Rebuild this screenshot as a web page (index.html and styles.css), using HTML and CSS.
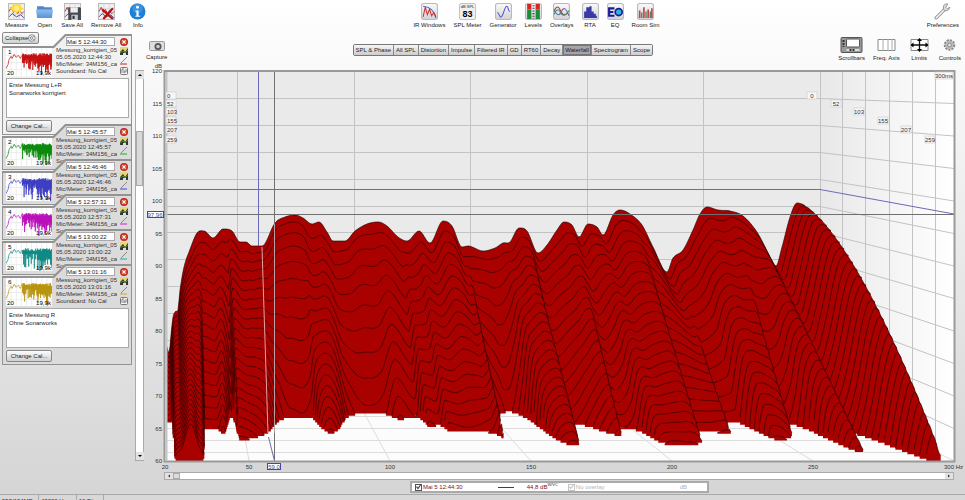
FILE: index.html
```
<!DOCTYPE html>
<html lang="en">
<head>
<meta charset="UTF-8">
<title>Room measurements</title>
<link rel="stylesheet" href="styles.css">
</head>
<body>
<svg class="defs" width="0" height="0">
	<defs>
		<linearGradient id="tile" x1="0" y1="0" x2="0" y2="1"><stop offset="0" stop-color="#fafafa"/><stop offset="1" stop-color="#d2d2d6"/></linearGradient>
		<linearGradient id="folder" x1="0" y1="0" x2="0" y2="1"><stop offset="0" stop-color="#8fbdf0"/><stop offset="1" stop-color="#5b93d6"/></linearGradient>
		<linearGradient id="side" x1="0" x2="1"><stop offset="0" stop-color="#e8e8e8"/><stop offset="1" stop-color="#ffffff"/></linearGradient>
		<g id="base"><rect x=".5" y=".5" width="15" height="15" rx="2" fill="url(#tile)" stroke="#b9b9bd"/></g>
		<g id="graph"><rect x=".5" y=".5" width="15" height="15" fill="#f1f1f3" stroke="#bbb"/><path d="M0 5.5H16M0 10.5H16M5.5 0V16M10.5 0V16" stroke="#ccc" stroke-width=".6"/><path d="M1 8L3 4L5 9L7 6L9 10L11 7L13 10L15 8" fill="none" stroke="#b33" stroke-width=".9"/><path d="M1 13L4 10L8 13L12 11L15 14" fill="none" stroke="#44a" stroke-width=".9"/></g>
		<g id="cross"><circle cx="4" cy="4" r="4" fill="#b82a1c"/><circle cx="4" cy="4" r="3" fill="#d8402c"/><path d="M2.4 2.4L5.6 5.6M5.6 2.4L2.4 5.6" stroke="#fff" stroke-width="1.2"/></g>
		<g id="disk"><rect width="8" height="8" fill="#333"/><path d="M0 5L3 2L5 5L8 1V0H0Z" fill="#e6d77a"/><path d="M0 6L3 4L5 6L8 3" stroke="#4a8a3a" fill="none"/><rect x="3" y="6" width="3" height="2" fill="#ddd"/></g>
		<g id="page"><rect x=".5" y=".5" width="7" height="7" rx="1" fill="#f4f4f4" stroke="#777"/><path d="M2 2V6M2 2H4M4 3V6M6 2V5H4" stroke="#555" stroke-width=".7" fill="none"/></g>
	</defs>
</svg>

<div class="toolbar">
	<div class="tools">
		<button class="tool"><svg class="icon" viewBox="0 0 16 16"><use href="#graph"/><path d="M8 0L9.5 2L12 1L12 3.5L14.500 5L12 6.500L12 9L9.500 8L8 10.500L6.500 8L4 9L4 6.500L1.500 5L4 3.500L4 1L6.500 2Z" fill="#ffd92e"/><circle cx="8" cy="5" r="2.500" fill="#fff27a"/></svg>Measure</button>
		<button class="tool"><svg class="icon" viewBox="0 0 16 16"><path d="M1 3H7L8 4H15V8H1Z" fill="#4f86c8"/><path d="M0 6H16L15 14H1Z" fill="url(#folder)"/></svg>Open</button>
		<button class="tool"><svg class="icon" viewBox="0 0 16 16"><use href="#graph"/><path d="M4 4H15L16 5V16H4Z" fill="#444a52"/><rect x="6" y="4" width="7" height="5" fill="#eee"/><rect x="7" y="11" width="6" height="5" fill="#c9cdd2"/><rect x="8" y="12" width="2" height="3" fill="#333"/></svg>Save All</button>
		<button class="tool"><svg class="icon" viewBox="0 0 16 16"><use href="#graph"/><path d="M4 6L14 15M14 5L5 15" stroke="#b80f0f" stroke-width="2"/></svg>Remove All</button>
		<button class="tool"><svg class="icon" viewBox="0 0 16 16"><circle cx="8" cy="8" r="7.500" fill="#1c7fd6"/><circle cx="8" cy="5" r="5" fill="#53a6ea" opacity=".5"/><circle cx="8" cy="4" r="1.400" fill="#fff"/><path d="M6 7H9V12H10.500V13H6V12H7V8H6Z" fill="#fff"/></svg>Info</button>
	</div>
	<div class="tools">
		<button class="tool"><svg class="icon" viewBox="0 0 16 16"><use href="#base"/><path d="M2 3Q12 4 14 14" fill="none" stroke="#55b" /><path d="M2 13L4 4L6 11L8 6L10 12L12 9L14 13" fill="none" stroke="#c33"/></svg>IR Windows</button>
		<button class="tool"><span class="meter"><small>dB SPL</small><b>83</b></span>SPL Meter</button>
		<button class="tool"><svg class="icon" viewBox="0 0 16 16"><use href="#base"/><path d="M2 9C4 9 4 14 6 13S9 3 11 3S12 8 14 8" fill="none" stroke="#55c"/></svg>Generator</button>
		<button class="tool"><svg class="icon" viewBox="0 0 16 16"><use href="#base"/><path d="M4 1V6M12 1V6" stroke="#d22" stroke-width="4"/><path d="M4 6V15M12 6V15" stroke="#1d8d3a" stroke-width="4"/><path d="M8 2V15" stroke="#444" stroke-width="2" stroke-dasharray="1 1.500"/></svg>Levels</button>
		<button class="tool"><svg class="icon" viewBox="0 0 16 16"><use href="#base"/><path d="M1 8Q4 0 7 7T14 9" fill="none" stroke="#b33"/><path d="M1 11Q4 3 7 9T15 7" fill="none" stroke="#396"/><path d="M1 6Q5 15 8 8T15 12" fill="none" stroke="#66a"/></svg>Overlays</button>
		<button class="tool"><svg class="icon" viewBox="0 0 16 16"><use href="#base"/><path d="M2 14V8H4V4H7V3H9V8H11V10H13V12H14V14Z" fill="#3939a8"/></svg>RTA</button>
		<button class="tool"><svg class="icon" viewBox="0 0 16 16"><use href="#base"/><path d="M7 5H2V12H7M2 8.500H6" fill="none" stroke="#1b1b98" stroke-width="2"/><circle cx="11" cy="8.500" r="3.300" fill="#2bb5d6" stroke="#1b1b98" stroke-width="1.600"/></svg>EQ</button>
		<button class="tool"><svg class="icon" viewBox="0 0 16 16"><use href="#base"/><path d="M2.500 14V7M6.500 14V4M10.500 14V6M14 14V5" stroke="#b44" stroke-width="1.500"/><path d="M4.500 14V9M8.500 14V8M12.500 14V8" stroke="#575" stroke-width="1.200"/></svg>Room Sim</button>
	</div>
	<div class="tools">
		<button class="tool"><svg class="icon" viewBox="0 0 16 16"><path d="M2 14L10 6" stroke="#888" stroke-width="3" stroke-linecap="round"/><path d="M2 14L10 6" stroke="#eee" stroke-width="1.500" stroke-linecap="round"/><path d="M13 1C10 0 8 3 9 6C10 8 14 8 15 4L12.500 5.500L11 4Z" fill="#ddd" stroke="#888" stroke-width=".8"/></svg>Preferences</button>
	</div>
</div>

<div class="main">
	<div class="sidebar">
		<button class="btn collapse">Collapse <svg width="8" height="8" viewBox="0 0 8 8"><circle cx="4" cy="4" r="3.500" fill="#eee" stroke="#666" stroke-width=".7"/><path d="M4 2L2 4L4 6M6 2L4 4L6 6" fill="none" stroke="#555" stroke-width=".7"/></svg></button>
		<div class="card open active">
			<div class="card-head"><input class="name" aria-label="Measurement 1" value="Mai 5 12:44:30"><svg class="mini" viewBox="0 0 8 8"><use href="#cross"/></svg></div>
			<div class="card-body">
				<svg class="thumb" viewBox="0 0 45 27" data-color="#c40d0d" data-num="1"></svg>
				<div class="info"><p>Messung_korrigiert_05-05</p><p>05.05.2020 12:44:30</p><p>Mic/Meter: 34M156_cal_0</p><p>Soundcard: No Cal</p></div>
				<div class="minis"><svg class="mini" viewBox="0 0 8 8"><use href="#disk"/></svg><svg class="mini" viewBox="0 0 8 8"><path d="M1 6L7 0" stroke="#888"/><path d="M0 7H7" stroke="#c22"/></svg><svg class="mini" viewBox="0 0 8 8"><use href="#page"/></svg></div>
			</div>
			<textarea class="notes" aria-label="Notes 1">Erste Messung L+R
Sonarworks korrigiert</textarea>
			<button class="btn cal">Change Cal...</button>
		</div>
		<div class="card">
			<div class="card-head"><input class="name" aria-label="Measurement 2" value="Mai 5 12:45:57"><svg class="mini" viewBox="0 0 8 8"><use href="#cross"/></svg></div>
			<div class="card-body">
				<svg class="thumb" viewBox="0 0 45 27" data-color="#0a8a0a" data-num="2"></svg>
				<div class="info"><p>Messung_korrigiert_05-05</p><p>05.05.2020 12:45:57</p><p>Mic/Meter: 34M156_cal_0</p><p>Soundcard: No Cal</p></div>
				<div class="minis"><svg class="mini" viewBox="0 0 8 8"><use href="#disk"/></svg><svg class="mini" viewBox="0 0 8 8"><path d="M1 6L7 0" stroke="#888"/><path d="M0 7H7" stroke="#2a2"/></svg></div>
			</div>
		</div>
		<div class="card">
			<div class="card-head"><input class="name" aria-label="Measurement 3" value="Mai 5 12:46:46"><svg class="mini" viewBox="0 0 8 8"><use href="#cross"/></svg></div>
			<div class="card-body">
				<svg class="thumb" viewBox="0 0 45 27" data-color="#3c3cc4" data-num="3"></svg>
				<div class="info"><p>Messung_korrigiert_05-05</p><p>05.05.2020 12:46:46</p><p>Mic/Meter: 34M156_cal_0</p><p>Soundcard: No Cal</p></div>
				<div class="minis"><svg class="mini" viewBox="0 0 8 8"><use href="#disk"/></svg><svg class="mini" viewBox="0 0 8 8"><path d="M1 6L7 0" stroke="#888"/><path d="M0 7H7" stroke="#44c"/></svg></div>
			</div>
		</div>
		<div class="card">
			<div class="card-head"><input class="name" aria-label="Measurement 4" value="Mai 5 12:57:31"><svg class="mini" viewBox="0 0 8 8"><use href="#cross"/></svg></div>
			<div class="card-body">
				<svg class="thumb" viewBox="0 0 45 27" data-color="#bb0dbb" data-num="4"></svg>
				<div class="info"><p>Messung_korrigiert_05-05</p><p>05.05.2020 12:57:31</p><p>Mic/Meter: 34M156_cal_0</p><p>Soundcard: No Cal</p></div>
				<div class="minis"><svg class="mini" viewBox="0 0 8 8"><use href="#disk"/></svg><svg class="mini" viewBox="0 0 8 8"><path d="M1 6L7 0" stroke="#888"/><path d="M0 7H7" stroke="#c2c"/></svg></div>
			</div>
		</div>
		<div class="card">
			<div class="card-head"><input class="name" aria-label="Measurement 5" value="Mai 5 13:00:22"><svg class="mini" viewBox="0 0 8 8"><use href="#cross"/></svg></div>
			<div class="card-body">
				<svg class="thumb" viewBox="0 0 45 27" data-color="#0d8a84" data-num="5"></svg>
				<div class="info"><p>Messung_korrigiert_05-05</p><p>05.05.2020 13:00:22</p><p>Mic/Meter: 34M156_cal_0</p><p>Soundcard: No Cal</p></div>
				<div class="minis"><svg class="mini" viewBox="0 0 8 8"><use href="#disk"/></svg><svg class="mini" viewBox="0 0 8 8"><path d="M1 6L7 0" stroke="#888"/><path d="M0 7H7" stroke="#2a9"/></svg></div>
			</div>
		</div>
		<div class="card open">
			<div class="card-head"><input class="name" aria-label="Measurement 6" value="Mai 5 13:01:16"><svg class="mini" viewBox="0 0 8 8"><use href="#cross"/></svg></div>
			<div class="card-body">
				<svg class="thumb" viewBox="0 0 45 27" data-color="#b8930d" data-num="6"></svg>
				<div class="info"><p>Messung_korrigiert_05-05</p><p>05.05.2020 13:01:16</p><p>Mic/Meter: 34M156_cal_0</p><p>Soundcard: No Cal</p></div>
				<div class="minis"><svg class="mini" viewBox="0 0 8 8"><use href="#disk"/></svg><svg class="mini" viewBox="0 0 8 8"><path d="M1 6L7 0" stroke="#888"/><path d="M0 7H7" stroke="#ca2"/></svg><svg class="mini" viewBox="0 0 8 8"><use href="#page"/></svg></div>
			</div>
			<textarea class="notes" aria-label="Notes 6">Erste Messung R
Ohne Sonarworks</textarea>
			<button class="btn cal">Change Cal...</button>
		</div>
	</div>
	<div class="vscroll">
		<button class="arrow" aria-label="Scroll up"><svg viewBox="0 0 8 8"><path d="M2 5H6L4 3Z"/></svg></button>
		<div class="vthumb"></div>
		<button class="arrow" aria-label="Scroll down"><svg viewBox="0 0 8 8"><path d="M2 3H6L4 5Z"/></svg></button>
	</div>

	<div class="panel">
		<div class="panel-head">
			<button class="tool capture"><svg class="camera" viewBox="0 0 16 10"><rect x=".5" y=".5" width="15" height="9" rx="1" fill="#ddd" stroke="#999"/><circle cx="9" cy="5.500" r="3.500" fill="#555"/><circle cx="9" cy="5.500" r="1.800" fill="#ccc"/></svg>Capture</button>
			<div class="tabs">
				<button>SPL &amp; Phase</button><button>All SPL</button><button>Distortion</button><button>Impulse</button><button>Filtered IR</button><button>GD</button><button>RT60</button><button>Decay</button><button class="on">Waterfall</button><button>Spectrogram</button><button>Scope</button>
			</div>
			<div class="tools view">
				<button class="tool"><svg class="wide" viewBox="0 0 22 16"><rect x=".500" y=".500" width="21" height="15" rx="1" fill="#999" stroke="#555"/><rect x="6" y="2" width="13" height="8" rx="1" fill="#fff" stroke="#555"/><path d="M3 3V10" stroke="#333" stroke-width="2" stroke-dasharray="2 1"/><path d="M6 13H19" stroke="#ddd" stroke-width="2"/><path d="M9 13H15" stroke="#333" stroke-width="2" stroke-dasharray="2 1"/></svg>Scrollbars</button>
				<button class="tool"><svg class="wide" viewBox="0 0 22 16"><path d="M2.500 2.500H19.500V13.500H2.500Z" fill="#fff" stroke="#888"/><path d="M7.500 2V14M12.500 2V14M16.500 2V14" stroke="#aaa"/></svg>Freq. Axis</button>
				<button class="tool"><svg class="wide" viewBox="0 0 22 16"><path d="M2.500 2.500H19.500V13.500H2.500Z" fill="#fff" stroke="#888"/><path d="M3 8H19M11 2V14" stroke="#111" stroke-width="1.300"/><path d="M2 8L5 5.500V10.500ZM20 8L17 5.500V10.500ZM11 1L8.500 4H13.500ZM11 15L8.500 12H13.500Z"/></svg>Limits</button>
				<button class="tool"><svg class="icon" viewBox="0 0 16 16"><circle cx="8" cy="8" r="4.500" fill="#ccc" stroke="#888" stroke-width="2.500" stroke-dasharray="2 1"/><circle cx="8" cy="8" r="4" fill="#bbb"/><circle cx="8" cy="8" r="1.800" fill="#eee" stroke="#888"/></svg>Controls</button>
			</div>
		</div>

		<svg id="chart" class="chart" viewBox="145 62 820 409">
			<rect x="164" y="71" width="790" height="390" fill="#fcfcfc"/>
			<rect x="164" y="71" width="656" height="322" fill="#eaeaea"/>
			<path d="M820 71H954V461L820 393Z" fill="url(#side)"/>
			<g id="grid" class="grid"></g>
			<path class="cursor" d="M258.500 71V247M167 189.500H820L954 214"/>
			<g id="waterfall"></g>
			<path class="hair" d="M164 214.500H954M274.500 71V461"/>
			<path class="trace" d="M262 247L264 310L268 433"/>
			<path class="hair inside" d="M274.500 224V433"/>
			<path class="cursor" d="M268.500 437L274.500 461"/>
			<path class="frame" d="M164.500 461.500V71H954.500V461.500Z"/>
			<path class="wall" d="M166.500 72V461"/>
			<g id="labels" class="labels"></g>
		</svg>

		<div class="hscroll">
			<button class="arrow" aria-label="Scroll left"><svg viewBox="0 0 8 8"><path d="M5 2V6L3 4Z"/></svg></button>
			<div class="hthumb"></div>
			<button class="arrow" aria-label="Scroll right"><svg viewBox="0 0 8 8"><path d="M3 2V6L5 4Z"/></svg></button>
		</div>
		<div class="legend">
			<label class="trace-name"><input type="checkbox" checked>Mai 5 12:44:30</label>
			<span class="line"></span>
			<span class="value">44,8 dB<sup>W/VC</sup></span>
			<label class="overlay"><input type="checkbox" checked disabled>No overlay</label>
			<span class="unit">dB</span>
		</div>
	</div>
</div>
<div class="status"><span>553/194MB</span><span>48000 Hz</span><span>16 Bit</span></div>
<script src="script.js"></script>
</body>
</html>
```

FILE: styles.css
```
* {
	box-sizing: border-box;
	margin: 0;
	padding: 0;
}
body {
	height: 100vh;
	overflow: hidden;
	font: 6px/7px "Liberation Sans", Arial, sans-serif;
	color: #222;
	background: linear-gradient(#ffffff, #fafafa 12%, #d6d6d6 96%);
}
.defs {
	position: absolute;
}
button, input, textarea {
	font: inherit;
	color: inherit;
}
svg {
	display: block;
}

/* top bar */
.toolbar {
	display: flex;
	justify-content: space-between;
	padding: 3px 6px 0 5px;
	height: 32px;
}
.tools {
	display: flex;
	gap: 8px;
}
.tool {
	display: flex;
	flex-direction: column;
	align-items: center;
	gap: 2px;
	border: 0;
	background: none;
	white-space: nowrap;
}
.icon {
	width: 17px;
	height: 17px;
}
.meter {
	width: 17px;
	height: 17px;
	border: 1px solid #c4c4c8;
	border-radius: 2px;
	background: #efefef;
}
.meter small {
	display: block;
	font-size: 4px;
	line-height: 6px;
}
.meter b {
	display: block;
	font-size: 9px;
	line-height: 8px;
	color: #000;
}

.main {
	display: flex;
}
.btn {
	border: 1px solid #888;
	border-radius: 2px;
	background: linear-gradient(#fdfdfd, #cfcfcf);
}

/* measurement list */
.sidebar {
	width: 132px;
	padding: 0 0 0 2px;
	flex: none;
}
.collapse {
	display: flex;
	align-items: center;
	justify-content: space-between;
	width: 37px;
	height: 12px;
	padding: 0 2px;
	margin-bottom: -10px;
}
.card {
	position: relative;
	isolation: isolate;
	height: 46px;
	margin-bottom: -11px;
	padding: 3px 3px 0 4px;
	background: #939393;
	clip-path: polygon(0 12px, 51px 12px, 63px 0, 100% 0, 100% 100%, 0 100%);
}
.card::before {
	content: "";
	position: absolute;
	z-index: -1;
	inset: 2px 1px 1px 1px;
	background: #dbdbdb;
	clip-path: polygon(0 12px, 51px 12px, 63px 0, 100% 0, 100% 100%, 0 100%);
}
.card.open {
	height: 101px;
}
.card.active::before {
	background: #f1f1f1;
}
.card-head {
	display: flex;
	justify-content: flex-end;
	align-items: center;
	gap: 5px;
	padding-right: 1px;
}
.name {
	width: 49px;
	height: 9px;
	border: 1px solid #aaa;
	background: #fff;
}
.mini {
	width: 8px;
	height: 8px;
}
.card-body {
	display: flex;
	margin-top: 1px;
	height: 29px;
}
.thumb {
	width: 46px;
	height: 28px;
	margin-top: 1px;
	background: #fff;
	flex: none;
}
.info {
	width: 61px;
	margin-left: 4px;
	overflow: hidden;
	white-space: nowrap;
	color: #333;
}
.minis {
	display: flex;
	flex-direction: column;
	gap: 2px;
	margin-left: 3px;
}
.notes {
	display: block;
	width: 100%;
	height: 40px;
	margin-top: 2px;
	padding: 2px;
	border: 1px solid #aaa;
	resize: none;
	line-height: 8px;
	background: #fff;
}
.cal {
	display: block;
	width: 46px;
	height: 12px;
	margin-top: 2px;
}

/* scrollbars */
.vscroll {
	display: flex;
	flex-direction: column;
	width: 9px;
	margin: 38px 1px 32px 3px;
	border: 1px solid #aaa;
	background: #fff;
}
.arrow {
	flex: none;
	width: 8px;
	height: 8px;
	border: 0;
	background: #e2e2e2;
}
.arrow svg {
	width: 8px;
	height: 8px;
}
.vthumb {
	height: 55px;
	margin: 52px 0 auto;
	border: 1px solid #aaa;
	background: #d9d9d9;
}
.hscroll {
	display: flex;
	height: 8px;
	margin: 1px 11px 0 19px;
	border: 1px solid #aaa;
	background: #fff;
}
.hscroll .arrow, .hscroll svg {
	height: 6px;
}
.hthumb {
	width: 7px;
	margin-right: auto;
	border: 1px solid #aaa;
	background: #dcdcdc;
}

/* chart panel */
.panel {
	flex: 1;
	min-width: 0;
}
.panel-head {
	display: flex;
	justify-content: space-between;
	height: 30px;
	padding: 5px 4px 0 1px;
}
.capture {
	padding-top: 4px;
	gap: 3px;
}
.camera {
	width: 16px;
	height: 10px;
}
.wide {
	width: 23px;
	height: 17px;
}
.tabs {
	display: flex;
	align-self: flex-start;
	height: 12px;
	margin-top: 7px;
	border: 1px solid #777;
	border-radius: 2px;
}
.tabs button {
	padding: 0 2px;
	border: 0;
	border-right: 1px solid #888;
	background: linear-gradient(#f6f6f6, #cccccc);
	white-space: nowrap;
}
.tabs button:last-child {
	border-right: 0;
}
.tabs .on {
	background: #a5a5a9;
	box-shadow: inset 0 0 0 1px #77777b;
}
.chart {
	width: 100%;
}
.grid {
	fill: none;
	stroke: #c3c3c3;
	stroke-width: 1;
}
.grid .floor {
	stroke: #dcdcdc;
}
.cursor {
	fill: none;
	stroke: #6a6ab8;
}
.hair {
	fill: none;
	stroke: #707070;
}
.hair.inside {
	stroke: #b9a0a0;
}
.trace {
	fill: none;
	stroke: #e2a0a0;
}
.frame {
	fill: none;
	stroke: #999;
	stroke-width: 2;
}
.wall {
	stroke: #c4c4c4;
	stroke-width: 2;
}
.slice {
	fill: #a90000;
}
.ridge {
	fill: none;
	stroke: #1c0000;
	stroke-width: .6;
}
.labels text {
	font-size: 6px;
	fill: #333;
}
.labels .tag {
	fill: #f7f7f7;
	stroke: #c8c8c8;
	stroke-width: .6;
}
.labels .mark {
	fill: #fff;
	stroke: #4444aa;
}
.labels .blue {
	fill: #4444aa;
}

/* legend */
.legend {
	display: flex;
	align-items: center;
	width: 299px;
	height: 12px;
	margin: 1px auto 0 265px;
	padding: 0 20px 0 3px;
	border: 2px solid #aaa;
	background: #fff;
}
.legend label {
	display: flex;
	align-items: center;
	gap: 1px;
}
.legend input {
	appearance: none;
	width: 7px;
	height: 7px;
	border: 1px solid #555;
	background: #fff;
}
.legend input::before {
	content: "";
	display: block;
	width: 5px;
	height: 5px;
	background: #444;
	clip-path: polygon(0 50%, 20% 35%, 40% 60%, 85% 0, 100% 15%, 40% 100%);
}
.trace-name, .value {
	color: #7c1515;
}
.line {
	width: 16px;
	margin: 0 13px 0 35px;
	border-top: 1px solid #8c2020;
}
.value sup {
	font-size: 4px;
	line-height: 4px;
	color: #333;
}
.legend .overlay {
	margin: 0 auto 0 10px;
	color: #b5b5b5;
}
.legend .overlay input {
	border-color: #c4c4c4;
}
.legend .overlay input::before {
	background: #c4c4c4;
}
.unit {
	color: #b5b5b5;
}

.status {
	display: flex;
	height: 14px;
	margin-top: 1px;
	border-top: 1px solid #aaa;
	background: #d8d8d8;
}
.status span {
	padding: 3px 9px 0 2px;
	border-right: 1px solid #aaa;
}
.status span:first-child {
	width: 39px;
}
```

FILE: script.js
```
var grid = document.getElementById('grid');
var labels = document.getElementById('labels');
var left = 166, back = 654, spread = 134, floorBack = 393, floorDepth = 68;

// level of the first slice, x and y on the back wall
var outline = [
	[166,345],[169,353],[171,335],[173,317],[176,311],[178,310],[180,290],[184,267],[189,252],[197,233],[204,231],[213,238],
	[223,229],[232,231],[240,242],[246,242],[252,246],[262,246],[275,223],[285,217],[295,215],[303,218],[312,224],[319,222],
	[327,232],[333,241],[345,241],[355,231],[367,224],[378,222],[387,226],[398,237],[407,241],[419,231],[430,243],[443,221],
	[452,226],[462,247],[468,246],[483,251],[495,248],[503,243],[510,242],[519,228],[527,231],[538,253],[547,245],[557,230],
	[564,222],[572,225],[579,237],[588,224],[597,227],[603,235],[613,215],[620,210],[630,214],[642,225],[653,247],[667,272],
	[673,258],[683,250],[693,230],[700,214],[707,207],[718,210],[730,211],[743,216],[757,232],[768,253],[776,266],[782,247],
	[790,217],[797,203],[804,205],[809,209]
];
// x, depth where the decay reaches the floor, curve
var decay = [
	[166,.46,1],[171,.46,1],[173,1,1],[180,1.2,.9],[186,1.5,.8],[193,1.15,.8],[198,1,.8],[201,.57,1],[212,.57,1],[217,.63,1],
	[223,.5,1],[227,.38,1.1],[230,.72,1],[241,.7,1],[258,.6,1.2],[268,.46,1.4],[283,.38,1.5],[301,.4,1.4],[306,.55,1],
	[312,.62,.9],[322,.55,1],[335,.38,1.2],[356,.31,1.5],[371,.33,1.3],[382,.41,1.2],[399,.37,1.1],[404,.52,1],[414,.5,1],
	[419,.6,1],[437,.58,1.1],[457,.62,1],[463,.69,1],[467,.45,1.1],[484,.31,1.4],[490,.3,1.4],[500,.42,1.2],[506,.7,1],
	[518,.79,1],[526,.72,1],[531,.46,1.1],[545,.5,1.2],[560,.62,1],[568,.66,1],[573,.54,1.1],[588,.58,1.1],[595,.76,1],
	[618,.78,1],[632,.74,1],[638,.6,1],[652,.6,1.1],[668,.62,1.1],[674,.46,1.3],[688,.46,1.4],[699,.72,1],[710,.7,1],
	[722,.62,1.1],[728,.46,1.4],[740,.54,1.2],[747,.8,1],[755,.9,1],[761,.82,1],[766,.6,1.1],[776,.62,1.2],[785,.75,1.3],
	[795,.98,1.5],[802,1.1,1.6],[809,1.02,1.6]
];

function lookup(table, x, col) {
	var i = 0;
	while (i < table.length - 2 && table[i + 1][0] < x) i++;
	var a = table[i], b = table[i + 1];
	var k = (x - a[0]) / (b[0] - a[0]);
	k = Math.max(0, Math.min(1, k));
	var p = table[Math.max(0, i - 1)], n = table[Math.min(table.length - 1, i + 2)];
	var w = b[0] - a[0];
	var m1 = (b[col] - p[col]) / (b[0] - p[0] || 1) * w;
	var m2 = (n[col] - a[col]) / (n[0] - a[0] || 1) * w;
	if ((a[col] - p[col]) * (b[col] - a[col]) <= 0) m1 = 0;
	if ((n[col] - b[col]) * (b[col] - a[col]) <= 0) m2 = 0;
	var k2 = k * k, k3 = k2 * k;
	return (2*k3 - 3*k2 + 1) * a[col] + (k3 - 2*k2 + k) * m1 + (3*k2 - 2*k3) * b[col] + (k3 - k2) * m2;
}

function drawWaterfall() {
	var out = '', slices = 30;
	for (var s = 0; s <= slices; s++) {
		var t = s / slices;
		var base = floorBack + floorDepth * t;
		var run = [];
		for (var x = 166; x <= 810; x++) {
			var h = 0;
			if (x < 810) {
				var T = lookup(decay, x, 1);
				h = (floorBack - lookup(outline, x, 1)) * (1 - Math.pow(t / T, lookup(decay, x, 2)));
				h += Math.sin(x / 5 + t * 3) * 9 * t * Math.max(0, 1 - t / T) * (x > 205 && x < 780 ? 1 : 0);
			}
			if (h > 1) {
				run.push((left + (x - left) * (1 + t * spread / back)).toFixed(1) + ' ' + (base - h).toFixed(1));
			} else if (run.length) {
				var first = run[0].split(' ')[0], last = run[run.length - 1].split(' ')[0];
				out += '<path class="slice" d="M' + first + ' ' + base + 'L' + run.join('L') + 'V' + base + 'Z"/>';
				out += '<path class="ridge" d="M' + run.join('L') + '"/>';
				run = [];
			}
		}
	}
	document.getElementById('waterfall').innerHTML = out;
}

function drawGrid() {
	var d = '', f = '', i, y;
	for (i = 1; i < 12; i++) {
		y = 71 + i * 26.9;
		d += 'M166 ' + (Math.round(y) + .5) + 'H820L954 ' + (71 + i * 32.5);
	}
	for (i = 0; i < 6; i++) {
		d += 'M' + (Math.round(237 + i * 116.5) + .5) + ' 71V393';
		f += 'M' + (237 + i * 116.5) + ' 393L' + (249 + i * 141) + ' 461';
	}
	for (i = 1; i < 6; i++) {
		d += 'M' + (819.5 + Math.round(i * 23.2)) + ' 71V' + (393 + i * 11.7);
		f += 'M166 ' + (Math.round(393 + i * 11.7) + .5) + 'H' + (820 + i * 23.2);
	}
	grid.innerHTML = '<path d="' + d + '"/><path class="floor" d="' + f + '"/>';
}

function text(x, y, s, anchor, cls) {
	return '<text x="' + x + '" y="' + y + '" text-anchor="' + (anchor || 'middle') + '" class="' + (cls || '') + '">' + s + '</text>';
}

function drawLabels() {
	var out = text(162, 68, 'dB', 'end');
	for (var i = 0; i <= 12; i++) {
		out += text(162, Math.round(73 + i * 32.5), 120 - i * 5, 'end');
	}
	out += text(165, 469, '20');
	for (i = 0; i < 5; i++) {
		out += text(249 + i * 141, 469, 50 + i * 50);
	}
	out += text(963, 469, '300 Hz', 'end');
	var times = ['0', '52', '103', '155', '207', '259'];
	var ty = [95, 103, 111, 120, 129, 139];
	for (i = 0; i < 6; i++) {
		var rx = Math.round(812 + i * 23.6);
		out += '<rect class="tag" x="166" y="' + (ty[i] - 3) + '" width="10" height="7"/>' + text(167, ty[i] + 3, times[i], 'start');
		out += '<rect class="tag" x="' + (rx - 5) + '" y="' + (ty[i] - 3) + '" width="10" height="7"/>' + text(rx, ty[i] + 3, times[i]);
	}
	out += '<rect class="tag" x="935" y="72" width="18" height="7"/>' + text(944, 78, '300ms');
	out += '<rect class="mark" x="147.5" y="211.5" width="16" height="6"/>' + text(155, 217, '97,96', 'middle', 'blue');
	out += '<rect class="mark" x="267.5" y="463.500" width="13" height="6"/>' + text(274, 469, '59,0', 'middle', 'blue');
	labels.innerHTML = out;
}

function drawThumbs() {
	var thumbs = document.getElementsByClassName('thumb');
	for (var n = 0; n < thumbs.length; n++) {
		var seed = n * 37 + 11, c = thumbs[n].getAttribute('data-color');
		var rnd = function () {
			seed = (seed * 9301 + 49297) % 233280;
			return seed / 233280;
		};
		var lines = '';
		for (var i = 1; i < 9; i++) lines += 'M' + i * 5 + ' 0V27';
		for (i = 1; i < 4; i++) lines += 'M0 ' + i * 7 + 'H45';
		var d = 'M0 20L2 16L3 11L5 8L6 10L8 6L10 9L12 7L14 10L15 8';
		for (var x = 16; x < 45; x += .5) {
			d += 'L' + x + ' ' + (5 + rnd() * 3).toFixed(1) + 'L' + (x + .2) + ' ' + (10 + rnd() * rnd() * 17 + (x > 30 ? 4 : 0)).toFixed(1);
		}
		thumbs[n].innerHTML = '<path d="' + lines + '" stroke="#e2e2e2" stroke-width=".6"/>' +
			'<path d="' + d + '" fill="none" stroke="' + c + '" stroke-width=".7"/>' +
			text(2, 6, thumbs[n].getAttribute('data-num'), 'start') + text(1, 26, '20', 'start') + text(44, 26, '19,9k', 'end');
	}
}

drawGrid();
drawWaterfall();
drawLabels();
drawThumbs();
```
